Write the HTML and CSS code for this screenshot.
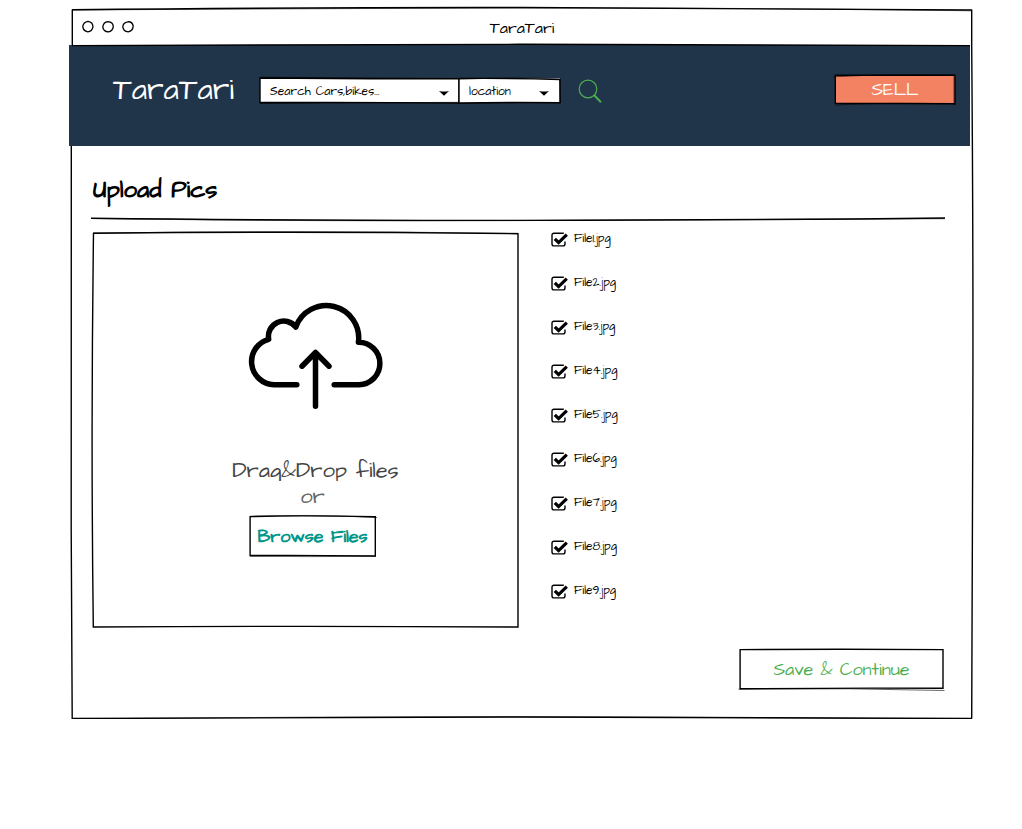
FILE: index.html
```html
<!DOCTYPE html>
<html lang="en">
<head>
<meta charset="utf-8">
<title>TaraTari</title>
<link rel="stylesheet" href="styles.css">
</head>
<body>
<svg class="defs" width="0" height="0" aria-hidden="true">
  <symbol id="check" viewBox="0 0 18 16">
    <path d="M12.8 1.2H3Q1 1.2 1 3.2V11.7Q1 13.9 3 13.9H12Q14 13.9 14 11.7V9.6" fill="none" stroke="#000" stroke-width="1.4"/>
    <path d="M3.8 6.8 7.6 10.6 15.8 2.6" fill="none" stroke="#000" stroke-width="3.2"/>
  </symbol>
</svg>
<div class="window">
  <svg class="sketch" viewBox="0 0 900 710" aria-hidden="true">
    <path d="M0 .8Q240 -1.8 450 -1.5T900 1M.3 .5V37M899.7 .5V37M899.7 37Q901.5 260 900.7 440T899.7 709.5M-.7 137Q-1.5 400 -.8 520T.2 709.5Q240 708 450 708T900 709.5"/>
    <path class="fine" d="M0 1Q250 -.5 450 -1T900 1.8M0 710Q250 707.5 450 707.8T900 710.3"/>
  </svg>
  <div class="titlebar">
    <svg class="dots" viewBox="0 0 54 14" aria-hidden="true">
      <path d="M7 1.4Q11.8 2 12 6.8 11 11.4 6.8 11.8 2.2 11.2 1.8 6.4 2.4 2.2 7 1.4ZM27 1.6Q32 2 32.3 6.6 31.6 11.1 27.3 11.9 22.4 11.6 21.8 7.1 22.2 2.1 27 1.6ZM46.8 1.8Q51.4 1.4 52.2 6.1 51.8 11 47.2 11.8 42.4 11.6 41.8 6.9 42 2.6 46.8 1.8Z"/>
    </svg>
    <span class="title">TaraTari</span>
  </div>
  <header class="header">
    <svg class="sketch" viewBox="0 0 901 101" aria-hidden="true"><path d="M3 .6Q230 -.8 450 -.7T901 .6"/></svg>
    <div class="brand">TaraTari</div>
    <div class="select search">
      <svg class="sketch" viewBox="0 0 199 25" aria-hidden="true"><path d="M0 0Q90 1 199 .7V25Q100 24 0 24.5Z"/><path class="fine" d="M0 -.8 199 .5M0 25.5 199 24.3"/></svg>
      <span class="query">Search Cars,bikes...</span>
      <svg class="caret" viewBox="0 0 10 5"><path d="M0 0Q5 1 10 0L5 4.8Z"/></svg>
    </div>
    <div class="select location">
      <svg class="sketch" viewBox="0 0 101 25" aria-hidden="true"><path d="M0 .5Q50 0 101 1.5V24.7Q50 24 0 25Z"/><path class="fine" d="M0 1Q60 -.8 101 1M100.5 1 101.3 25M0 25.5 102 24.5"/></svg>
      <span class="place">location</span>
      <svg class="caret" viewBox="0 0 10 5"><path d="M0 0Q5 1 10 0L5 4.8Z"/></svg>
    </div>
    <svg class="magnifier" viewBox="0 0 26 26"><circle cx="11" cy="11" r="8.8"/><path d="m17 17 7 7.2" class="handle"/></svg>
    <div class="sell">
      <svg class="sketch" viewBox="0 0 120 29" aria-hidden="true"><path d="M.3 .3 120 .3V28.7L.3 28.3Z"/><path class="fine" d="M-1.5 1.8Q50 -1.2 120 0M0 30Q50 27.5 121 28.8M119 0V30"/></svg>
      <span>SELL</span>
    </div>
  </header>
  <main class="main">
    <h1 class="heading">Upload Pics</h1>
    <svg class="rule" viewBox="0 0 854 6" aria-hidden="true"><path d="M0 1.3Q200 3.6 427 3.4T854 1"/><path class="fine" d="M0 1.5Q220 4.6 427 3.6T854 1.7"/></svg>
    <div class="columns">
      <section class="dropzone">
        <svg class="sketch" viewBox="0 0 425 395" aria-hidden="true"><path d="M0 1.2Q210 -1 425 1.7V395Q210 393.7 .3 395Q-1 290 -.9 195T.5 1"/><path class="fine" d="M0 1Q210 -1.5 425 1.3"/></svg>
        <svg class="cloud" viewBox="247 302 137 108" aria-hidden="true">
          <path d="M296.8 384.7H274A23.1 23.1 0 0 1 268.7 339.3A15.3 15.3 0 0 1 295.8 327A32.4 32.4 0 0 1 358.4 342.3A21.2 21.2 0 0 1 359 384.7H334.2M315.5 353V406.2M302 366.2 315.5 352.5 329 366.2"/>
        </svg>
        <p class="drag">Drag&amp;Drop files</p>
        <p class="or">or</p>
        <div class="browse">
          <svg class="sketch" viewBox="0 0 125 40" aria-hidden="true"><path d="M.1 .6Q50 -1 125.3 .8V40Q50 39 .1 39.5Z"/><path class="fine" d="M0 .3Q60 -2 127 1.6M0 40.3Q60 41 126 40.2"/></svg>
          <span>Browse Files</span>
        </div>
      </section>
      <ul class="files">
        <li><svg class="box"><use href="#check"/></svg><span>File1.jpg</span></li>
        <li><svg class="box"><use href="#check"/></svg><span>File2.jpg</span></li>
        <li><svg class="box"><use href="#check"/></svg><span>File3.jpg</span></li>
        <li><svg class="box"><use href="#check"/></svg><span>File4.jpg</span></li>
        <li><svg class="box"><use href="#check"/></svg><span>File5.jpg</span></li>
        <li><svg class="box"><use href="#check"/></svg><span>File6.jpg</span></li>
        <li><svg class="box"><use href="#check"/></svg><span>File7.jpg</span></li>
        <li><svg class="box"><use href="#check"/></svg><span>File8.jpg</span></li>
        <li><svg class="box"><use href="#check"/></svg><span>File9.jpg</span></li>
      </ul>
    </div>
    <div class="save">
      <svg class="sketch" viewBox="0 0 203 39" aria-hidden="true"><path d="M.1 -.4Q100 -1.2 203 -.4V38.3Q100 37.8 .1 38.8Z"/><path class="fine" d="M-1.5 39.2 110 38.8 204.5 40.5"/></svg>
      <span>Save &amp; Continue</span>
    </div>
  </main>
</div>
</body>
</html>
```
FILE: styles.css
```css
* { box-sizing: border-box; }
body {
  margin: 0;
  background: #fff;
  color: #000;
  font-family: "Architects Daughter", Lato, sans-serif;
}
.defs { display: block; }
svg { display: block; flex: none; }
.window {
  position: relative;
  width: 900px;
  height: 710px;
  margin: 9px 0 0 72px;
}
.sketch {
  position: absolute;
  inset: 0;
  width: 100%;
  height: 100%;
  overflow: visible;
  fill: none;
  stroke: #000;
  stroke-width: 1.4;
  pointer-events: none;
}
.fine { stroke-width: .6; }
.titlebar {
  display: grid;
  grid-template-columns: 1fr auto 1fr;
  align-items: center;
  height: 36px;
  padding-left: 9px;
}
.dots { width: 54px; height: 14px; fill: none; stroke: #000; stroke-width: 1.3; }
.title { font-size: 16px; line-height: 20px; margin-left: -9px; padding-top: 2px; }
.header {
  position: relative;
  display: flex;
  align-items: flex-start;
  width: 901px;
  height: 101px;
  margin-left: -3px;
  padding: 29px 15px 0 44px;
  background: #20344a;
}
.brand {
  width: 147px;
  margin-top: -3px;
  color: #fff;
  font-size: 30px;
  line-height: 38px;
}
.select {
  position: relative;
  display: flex;
  align-items: center;
  height: 25px;
  margin-top: 4px;
  padding: 0 11px 0 10px;
  background: #fff;
  font-size: 12px;
}
.search { width: 199px; padding-right: 10px; }
.location { width: 101px; }
.query, .place { padding-top: 1px; }
.query { letter-spacing: .07px; }
.caret { width: 10px; height: 5px; margin: 6px 0 0 auto; }
.magnifier { width: 26px; height: 26px; margin: 4px 0 0 17px; fill: none; stroke: #4caf50; stroke-width: 1.2; }
.handle { stroke-width: 2; }
.sell {
  position: relative;
  width: 120px;
  height: 29px;
  margin: 1px 0 0 auto;
  background: #f28262;
  color: #fff;
  font-size: 18px;
  line-height: 30px;
  text-align: center;
}
.main { padding: 0 28px 0 21px; }
.heading {
  height: 71px;
  margin: 0;
  padding-top: 26px;
  font-size: 24px;
  font-weight: 700;
  line-height: 36px;
}
.rule { width: 854px; height: 6px; margin-left: -2px; fill: none; stroke: #000; stroke-width: 1.4; overflow: visible; }
.rule .fine { stroke-width: .6; }
.columns { display: flex; height: 395px; margin-top: 9px; }
.dropzone {
  position: relative;
  display: flex;
  flex-direction: column;
  align-items: center;
  width: 425px;
  height: 395px;
  padding: 70px 0 0 20px;
}
.cloud { width: 137px; height: 108px; fill: none; stroke: #000; stroke-width: 5.5; stroke-linecap: round; stroke-linejoin: round; overflow: visible; }
.drag, .or { margin: 0; color: #444; font-size: 22px; line-height: 26px; }
.drag { height: 23px; margin-top: 48px; white-space: nowrap; overflow: hidden; }
.or { margin: 3px 6px 0 0; color: #666; }
.browse {
  position: relative;
  width: 125px;
  height: 40px;
  margin: 6px 6px 0 0;
  color: #009688;
  font-size: 18px;
  font-weight: 700;
  line-height: 41px;
  text-align: center;
  white-space: nowrap;
}
.files { margin: 0 0 0 33px; padding: 0; list-style: none; }
.files li { display: flex; height: 44px; font-size: 12px; line-height: 14px; }
.box { width: 18px; height: 16px; margin-right: 5px; }
.save {
  position: relative;
  width: 203px;
  height: 39px;
  margin: 23px 1px 0 auto;
  color: #4caf50;
  font-size: 18px;
  line-height: 40px;
  text-align: center;
}
```
